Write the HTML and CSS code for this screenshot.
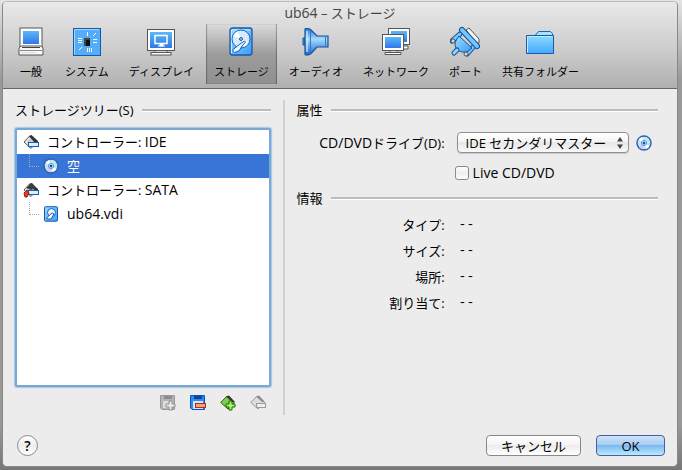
FILE: index.html
```html
<!DOCTYPE html>
<html lang="ja">
<head>
	<meta charset="utf-8">
	<title>ub64 – ストレージ</title>
	<link rel="stylesheet" href="styles.css">
</head>
<body>

<!-- shared fills and small icons -->
<svg class="defs" width="0" height="0" aria-hidden="true">
	<defs>
		<linearGradient id="blue" x1="0" y1="0" x2="0" y2="1"><stop offset="0" stop-color="#5db8f8"/><stop offset="1" stop-color="#2f78e8"/></linearGradient>
		<linearGradient id="sky" x1="0" y1="0" x2="1" y2="1"><stop offset="0" stop-color="#9bdcff"/><stop offset="1" stop-color="#3a9df6"/></linearGradient>
		<linearGradient id="cone" x1="0" y1="0" x2="0" y2="1"><stop offset="0" stop-color="#2878d8"/><stop offset=".4" stop-color="#a5dcff"/><stop offset="1" stop-color="#1c64cc"/></linearGradient>
		<linearGradient id="folder" x1="0" y1="0" x2="0" y2="1"><stop offset="0" stop-color="#8cdcff"/><stop offset="1" stop-color="#44a8fc"/></linearGradient>
		<symbol id="disc" viewBox="0 0 16 16">
			<circle cx="8" cy="8" r="7" fill="#c4e2f8" stroke="#2a62b4" stroke-width="1.500"/>
			<path d="M8 8L2.500 5A6.300 6.300 0 0 1 6 2z" fill="#fff"/>
			<path d="M8 8L13.600 11A6.300 6.300 0 0 1 10 14z" fill="#fff"/>
			<path d="M8 8L9 1.800A6.300 6.300 0 0 1 13 4z" fill="#b9f0e0"/>
			<path d="M8 8L3 12A6.300 6.300 0 0 0 7 14.200z" fill="#d8c6f4"/>
			<circle cx="8" cy="8" r="2.600" fill="#fff" stroke="#4a9ae4"/>
			<circle cx="8" cy="8" r="1.500" fill="#1c4e9c"/>
		</symbol>
		<symbol id="disk" viewBox="0 0 28 32">
			<rect x="3" y="2" width="22" height="27" rx="2.500" fill="url(#sky)" stroke="#1558b0" stroke-width="1.300"/>
			<path d="M4.500 27V4h19" fill="none" stroke="#c8ecff"/>
			<circle cx="14" cy="13" r="9" fill="#d6eafb" stroke="#1d66be"/>
			<path d="M14 13L6.500 10a8 8 0 0 1 4-4.500zM14 13l7.500 3a8 8 0 0 1-4 4.500z" fill="#fff"/>
			<circle cx="14" cy="13" r="1.500" fill="#8ccaf8" stroke="#1a5cb2"/>
			<path d="M17.500 15L13 18L6 23.500Q5 26 7.500 26.500L12 25L15 20L18.500 16z" fill="#eaf7ff" stroke="#1a5cb2"/>
		</symbol>
		<symbol id="controller" viewBox="0 0 16 16">
			<path d="M1 8L7 1.500L14 7.500L8 14.500z" fill="#e9e9e9" stroke="#555"/>
			<path d="M6 2.500L8.500 1L15 7v1.500h-3.500z" fill="#333"/>
			<path d="M3.500 8L7 4.500L10.500 8L8 11z" fill="#ccc"/>
			<rect x="5.500" y="8.500" width="10" height="4" fill="#d9f2ff" stroke="#155fae"/>
		</symbol>
	</defs>
</svg>

<div class="window">
	<header class="header">
		<h1 class="title"><span class="latin">ub64</span> – ストレージ</h1>
		<nav class="toolbar">
			<button type="button" class="tab">
				<svg width="28" height="32" viewBox="0 0 28 32">
					<rect x="3" y="2" width="22" height="19" fill="#fff" stroke="#555"/>
					<rect x="6" y="5" width="16" height="13" fill="url(#blue)"/>
					<path d="M4 20h20l2 2v7H2v-7z" fill="#f8f8f8" stroke="#555"/>
					<path d="M3 24.500h22" stroke="#888"/>
					<path d="M5 21.500h18" stroke="#444"/>
					<path d="M4 26.500h15" stroke="#ddd"/>
				</svg>
				<span>一般</span>
			</button>
			<button type="button" class="tab">
				<svg width="28" height="32" viewBox="0 0 28 32">
					<rect x=".500" y="2.500" width="27" height="27" fill="#55acf8" stroke="#1658ac"/>
					<path d="M1.500 28.500V3.500H26" fill="none" stroke="#9cdcff"/>
					<rect x="11" y="12" width="6" height="8" fill="#444"/>
					<rect x="13" y="14" width="4" height="6" fill="#111"/>
					<path d="M14.500 6v4M20 10l3-3M20 13.500h4M20 16.500h4M5 12.500h4M5 14.500h4M5 16.500h4M6 24l3-3M14.500 22v4M16.500 22v4M18.500 22v4" stroke="#fff"/>
				</svg>
				<span>システム</span>
			</button>
			<button type="button" class="tab">
				<svg width="28" height="32" viewBox="0 0 28 32">
					<path d="M8 24h12v4H8z" fill="#ddd" stroke="#666"/>
					<rect x=".500" y="3.500" width="27" height="21" fill="#fff" stroke="#555"/>
					<rect x="3" y="6" width="22" height="16" fill="url(#blue)"/>
					<rect x="8" y="9.500" width="12" height="8" fill="none" stroke="#fff" stroke-width="1.500"/>
					<path d="M13 18h3v2h-3zM11 20h7" fill="#fff" stroke="#fff"/>
					<rect x="4" y="26.500" width="20" height="2.500" fill="#fff" stroke="#555"/>
				</svg>
				<span>ディスプレイ</span>
			</button>
			<button type="button" class="tab tab-active">
				<svg width="28" height="32"><use href="#disk"/></svg>
				<span>ストレージ</span>
			</button>
			<button type="button" class="tab">
				<svg width="28" height="32" viewBox="0 0 28 32">
					<path d="M3 12H1v7h2z" fill="#4a9cf0" stroke="#164f9c"/>
					<path d="M3 3.500Q3 2.500 4 2.500H6Q8 2.500 9 4L15 10H26V21H15L9 27.500Q8 29 6 29H4Q3 29 3 28z" fill="url(#cone)" stroke="#1a4e98" stroke-width="1.200"/>
					<path d="M8.500 4v23.500M23.500 10.500v10" stroke="#2f76cc"/>
					<path d="M5 5v21" stroke="#d8f4ff" stroke-width="2" opacity=".6"/>
				</svg>
				<span>オーディオ</span>
			</button>
			<button type="button" class="tab">
				<svg width="28" height="32" viewBox="0 0 28 32">
					<path d="M15 20h11v3H15z" fill="#fff" stroke="#555"/>
					<rect x="6.500" y="2.500" width="21" height="16" fill="#fff" stroke="#555"/>
					<rect x="9" y="5" width="16" height="11" fill="url(#blue)"/>
					<path d="M8 24h7v3H8z" fill="#ddd" stroke="#666"/>
					<rect x=".500" y="8.500" width="21" height="16" fill="#fff" stroke="#555"/>
					<rect x="3" y="11" width="16" height="11" fill="url(#blue)"/>
					<path d="M3 26.500h16v2H3z" fill="#fff" stroke="#555"/>
				</svg>
				<span>ネットワーク</span>
			</button>
			<button type="button" class="tab">
				<svg width="30" height="32" viewBox="0 0 30 32">
					<path d="M16 4l3-2L29 13v4h-3z" fill="#f4f4f4" stroke="#555"/>
					<path d="M2 15L10 8M17 28L25 19" stroke="#174f9a" stroke-width="5" stroke-linecap="round"/>
					<path d="M3 14L10 8M18 27L25 19" stroke="#78c8ff" stroke-width="3" stroke-linecap="round"/>
					<path d="M9 10L22 22L17 26Q9 27 6 22Q3 17 9 10z" fill="url(#sky)" stroke="#174f9a"/>
					<path d="M7 24L4 27" stroke="#174f9a" stroke-width="5" stroke-linecap="round"/>
					<path d="M7 24L4 27" stroke="#8fd6ff" stroke-width="3" stroke-linecap="round"/>
					<path d="M12 4L27 20" stroke="#174f9a" stroke-width="6" stroke-linecap="round"/>
					<path d="M12 4L27 20" stroke="#74c8ff" stroke-width="4" stroke-linecap="round"/>
					<circle cx="3" cy="15" r="2" fill="#ddd" stroke="#555"/>
					<circle cx="16" cy="28" r="2" fill="#ddd" stroke="#555"/>
				</svg>
				<span>ポート</span>
			</button>
			<button type="button" class="tab">
				<svg width="28" height="32" viewBox="0 0 28 32">
					<path d="M9.500 9l3-3.500h12l2 2V12h-17z" fill="#a8e2ff" stroke="#1b66b8"/>
					<path d="M.500 9.500h27v18H.500z" fill="url(#folder)" stroke="#1558ac"/>
					<path d="M1.500 26.500v-16h25" fill="none" stroke="#c0edff"/>
				</svg>
				<span>共有フォルダー</span>
			</button>
		</nav>
	</header>

	<main class="content">
		<section class="storage">
			<h2 class="group-title">ストレージツリー(S)</h2>
			<ul class="tree" tabindex="0">
				<li class="row"><svg width="16" height="16"><use href="#controller"/></svg><span>コントローラー: <span class="latin">IDE</span></span></li>
				<li class="row row-child row-selected"><i class="branch"></i><svg width="16" height="16"><use href="#disc"/></svg>空</li>
				<li class="row">
					<svg width="16" height="16" viewBox="0 0 16 16">
						<use href="#controller"/>
						<path d="M3 6L9 1L13 6L8 8z" fill="#3c3c3c"/>
						<path d="M1 11l3-3 2 3-2 4H2z" fill="#e83c20" stroke="#8a1c0c"/>
					</svg>
					<span>コントローラー: <span class="latin">SATA</span></span>
				</li>
				<li class="row row-child"><i class="branch"></i><svg width="16" height="16" viewBox="0 0 16 16">
						<rect x="1.500" y=".700" width="13" height="14.500" rx="1" fill="url(#sky)" stroke="#1558b0"/>
						<circle cx="8.500" cy="6.500" r="4" fill="#e8f6ff" stroke="#1a5cb2"/>
						<path d="M9 7L4 11.500V13h4L11 8z" fill="#fff" stroke="#1a5cb2"/>
					</svg><span class="latin">ub64.vdi</span></li>
			</ul>
			<div class="tools">
				<button type="button" class="tool" disabled aria-label="アタッチメントの追加">
					<svg width="16" height="16" viewBox="0 0 16 16">
						<path d="M.500.500h14v14H2l-1.500-1.500z" fill="#b4b4b4" stroke="#999"/>
						<path d="M4 1h8v3H4z" fill="#8c8c8c"/><path d="M3 6h10v7H3z" fill="#ddd"/>
						<path d="M9 6h3v3h3v3h-3v3H9v-3H6V9h3z" fill="#e8e8e8" stroke="#8e8e8e"/>
					</svg>
				</button>
				<button type="button" class="tool" aria-label="アタッチメントの削除">
					<svg width="16" height="16" viewBox="0 0 16 16">
						<path d="M.500.500h14v14H2l-1.500-1.500z" fill="#2c8cf0" stroke="#0c54b0"/>
						<path d="M4 1h8v3H4z" fill="#0a459c"/><path d="M3 6h10v8H3z" fill="#c4e8ff"/>
						<rect x="5.500" y="8.500" width="10" height="4" fill="#ff9a78" stroke="#b42c12"/>
					</svg>
				</button>
				<button type="button" class="tool" aria-label="コントローラーの追加">
					<svg width="16" height="16" viewBox="0 0 16 16">
						<path d="M.700 7.500L7 1L14.500 7.500L8 14z" fill="#80cc50" stroke="#246a0c"/>
						<path d="M6 1.500L9 .500L15 7H12z" fill="#333"/>
						<path d="M9 6h3v3h3v3h-3v3H9v-3H6V9h3z" fill="#a8f464" stroke="#1e6408"/>
					</svg>
				</button>
				<button type="button" class="tool" disabled aria-label="コントローラーの削除">
					<svg width="16" height="16" viewBox="0 0 16 16">
						<path d="M.700 7.500L7 1L14.500 7.500L8 14z" fill="#ddd" stroke="#999"/>
						<path d="M6 1.500L9 .500L15 7H12z" fill="#8c8c8c"/>
						<rect x="6.500" y="8.500" width="9" height="4" fill="#eee" stroke="#999"/>
					</svg>
				</button>
			</div>
		</section>

		<section class="details">
			<h2 class="group-title">属性</h2>
			<div class="fields">
				<label class="field-label" for="drive"><span class="latin">CD/DVD</span>ドライブ(D):</label>
				<div class="drive">
					<div class="popup">
						<select id="drive"><option>IDE セカンダリマスター</option></select>
						<svg class="popup-arrows" width="6" height="12" viewBox="0 0 6 12"><path d="M0 4.500L3 0L6 4.500zM0 7.500h6L3 12z" fill="#444"/></svg>
					</div>
					<button type="button" class="tool" aria-label="ディスクを選択"><svg width="16" height="16"><use href="#disc"/></svg></button>
				</div>
				<label class="live"><input type="checkbox"><span class="latin">Live CD/DVD</span></label>
			</div>
			<h2 class="group-title">情報</h2>
			<dl class="info">
				<dt>タイプ:</dt><dd>--</dd>
				<dt>サイズ:</dt><dd>--</dd>
				<dt>場所:</dt><dd>--</dd>
				<dt>割り当て:</dt><dd>--</dd>
			</dl>
		</section>
	</main>

	<footer class="footer">
		<button type="button" class="help">?</button>
		<button type="button" class="button button-cancel">キャンセル</button>
		<button type="button" class="button button-ok">OK</button>
	</footer>
</div>

</body>
</html>
```
FILE: styles.css
```css
* {
	box-sizing: border-box;
}

body {
	margin: 0;
	min-height: 100vh;
	display: flex;
	padding: 1px 4px 3px 2px;
	background: linear-gradient(#e4e4e4, #999 80px, #999 90%, #777);
	font: 13px/20px "Open Sans", "Noto Sans CJK JP", sans-serif;
	color: #000;
}

h1, h2, ul, dl, dd {
	margin: 0;
	padding: 0;
	font-size: inherit;
	font-weight: normal;
}

button, select {
	font: inherit;
	color: inherit;
	margin: 0;
	padding: 0;
	border: 0;
	background: none;
}

svg {
	display: block;
	flex: none;
}

.defs {
	position: absolute;
}

.window {
	flex: 1;
	display: flex;
	flex-direction: column;
	background: #ececec;
	border: 1px solid #888;
	border-top-color: #bbb;
	border-radius: 5px;
	overflow: hidden;
}

/* title bar and tabs */
.header {
	background: linear-gradient(#e9e9e9, #cfcfcf 50%, #b0b0b0);
	border-bottom: 1px solid #666;
	padding-bottom: 4px;
}

.title {
	height: 22px;
	line-height: 22px;
	text-align: center;
	color: #444;
}

.toolbar {
	display: flex;
	gap: 4px;
	padding-left: 6px;
}

.tab {
	display: flex;
	flex-direction: column;
	align-items: center;
	gap: 4px;
	height: 60px;
	padding: 2px 8px;
	font-size: 11px;
	line-height: 20px;
	white-space: nowrap;
}

.tab-active {
	background: linear-gradient(rgba(0, 0, 0, 0), rgba(0, 0, 0, .22) 50%, rgba(0, 0, 0, .2));
	box-shadow: inset 1px 0 1px rgba(0, 0, 0, .3), inset -1px 0 1px rgba(0, 0, 0, .3);
}

/* panes */
.content {
	flex: 1;
	display: grid;
	grid-template-columns: 270fr 374fr;
	padding: 11px 19px 0 12px;
}

.storage {
	display: flex;
	flex-direction: column;
	padding-right: 12px;
	border-right: 2px solid #d0d0d0;
}

.details {
	padding-left: 12px;
}

.group-title {
	display: flex;
	align-items: center;
	gap: 8px;
	line-height: 20px;
}

.group-title::after {
	content: "";
	flex: 1;
	height: 2px;
	background: #bcbcbc;
	border-bottom: 1px solid #fff;
}

.tree {
	flex: 1;
	margin: 8px 0;
	list-style: none;
	background: #fff;
	border: 2px solid #7aa8d4;
	border-radius: 2px;
	box-shadow: 0 0 1px 1px #a8c8e6;
	outline: none;
}

.row {
	display: flex;
	align-items: center;
	gap: 8px;
	height: 24px;
	padding-left: 6px;
}

.row-child {
	padding-left: 12px;
}

.branch {
	align-self: flex-start;
	width: 10px;
	height: 13px;
	margin-right: -4px;
	border-left: 1px dotted #aaa;
	border-bottom: 1px dotted #aaa;
}

.row-selected {
	background: #3875d7;
	color: #fff;
}

.latin {
	font-size: 14px;
}

.tools {
	display: flex;
	justify-content: flex-end;
	gap: 14px;
	padding: 0 5px 4px 0;
}

/* attributes */
.fields,
.info {
	display: grid;
	grid-template-columns: 148px 1fr;
	column-gap: 12px;
}

.fields {
	row-gap: 8px;
	padding: 12px 0 3px;
	align-items: center;
}

.field-label {
	text-align: right;
}

.drive {
	display: flex;
	align-items: center;
	gap: 7px;
	padding-right: 6px;
}

.popup {
	flex: 1;
	position: relative;
}

.popup select {
	appearance: none;
	display: block;
	width: 100%;
	height: 21px;
	padding: 0 20px 0 8px;
	border: 1px solid #909090;
	border-radius: 4px;
	background: linear-gradient(#fff, #f4f4f4 50%, #e8e8e8 50%, #f8f8f8);
	line-height: 18px;
	box-shadow: 0 1px 1px rgba(0, 0, 0, .15);
}

.popup-arrows {
	position: absolute;
	top: 5px;
	right: 6px;
}

.live {
	grid-column: 2;
	display: flex;
	align-items: center;
	gap: 4px;
	margin-left: -2px;
	line-height: 24px;
}

.live input {
	appearance: none;
	width: 14px;
	height: 14px;
	margin: 0;
	border: 1px solid #888;
	border-radius: 3px;
	background: linear-gradient(#fff, #eee 50%, #fff);
}

.info {
	padding-top: 4px;
	line-height: 26px;
}

.info dt {
	text-align: right;
}

.info dd {
	padding-left: 2px;
	font-family: "Liberation Mono", monospace;
}

/* bottom bar */
.footer {
	display: flex;
	align-items: center;
	gap: 15px;
	padding: 20px 12px 10px 14px;
}

.help {
	width: 21px;
	height: 21px;
	margin-right: auto;
	border: 1px solid #888;
	border-radius: 50%;
	background: linear-gradient(#fff, #eee 50%, #fff);
	font-weight: 600;
	font-size: 14px;
	line-height: 18px;
}

.button {
	height: 21px;
	border: 1px solid #888;
	border-radius: 4px;
	background: linear-gradient(#fff, #f4f4f4 50%, #ececec 50%, #fff);
	line-height: 18px;
}

.button-cancel {
	width: 95px;
}

.button-ok {
	width: 69px;
	border-color: #4a5f9e;
	background: linear-gradient(#cfe2f8, #a4ccf3 50%, #7cb8f0 50%, #b8ebff);
}
```
